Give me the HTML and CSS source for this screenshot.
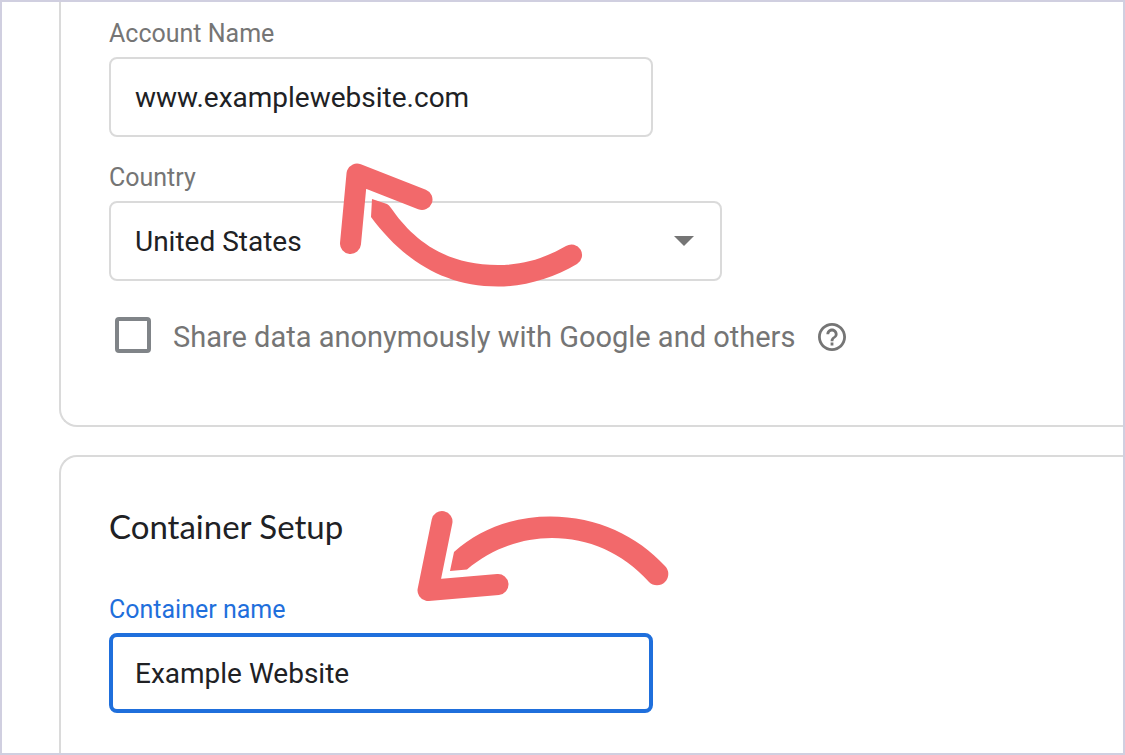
FILE: index.html
```html
<!DOCTYPE html>
<html lang="en">
<head>
  <meta charset="UTF-8" />
  <meta name="viewport" content="width=device-width, initial-scale=1.0"/>
  <title>Add a New Account</title>
  <link rel="stylesheet" href="styles.css">
</head>
<body>

  <main class="frame">
    <section class="card account">
      <div class="field">
        <label for="account">Account Name</label>
        <input type="text" id="account" value="www.examplewebsite.com">
      </div>

      <div class="field">
        <label for="country">Country</label>
        <div class="select">
          <select id="country">
            <option>United States</option>
          </select>
          <svg class="caret" viewBox="0 0 20 10"><path d="M0 0h20L10 10z"/></svg>
        </div>
      </div>

      <div class="share">
        <input type="checkbox" id="share">
        <label for="share">Share data anonymously with Google and others</label>
        <button class="help" aria-label="Help">
          <svg viewBox="2 2 20 20"><path d="M11 18h2v-2h-2v2zm1-16C6.48 2 2 6.48 2 12s4.48 10 10 10 10-4.48 10-10S17.52 2 12 2zm0 18c-4.41 0-8-3.59-8-8s3.59-8 8-8 8 3.59 8 8-3.59 8-8 8zm0-14c-2.21 0-4 1.79-4 4h2c0-1.1.9-2 2-2s2 .9 2 2c0 2-3 1.75-3 5h2c0-2.25 3-2.5 3-5 0-2.21-1.79-4-4-4z"/></svg>
        </button>
      </div>

      <svg class="arrow arrow-account" viewBox="340 162 244 126">
        <path class="head" d="M422 199.5L357 174L350.5 243.5"/>
        <path d="M372 199L387 204Q389 205 391 208C410 235 440 265 498 265C524 265 545 258 566 246A10.5 10.5 0 0 1 577 264C553 278 526 286.5 498 286.5C440 286.5 400 256 371 217Z"/>
      </svg>
    </section>

    <section class="card container">
      <h2>Container Setup</h2>
      <div class="field active">
        <label for="container">Container name</label>
        <input type="text" id="container" value="Example Website">
      </div>

      <svg class="arrow arrow-container" viewBox="416 510 254 92">
        <path class="head" d="M442 521.5L428 590.5L498 584.5"/>
        <path d="M454 552C480 528 515 516.5 550 516.5C598 516.5 637 536 665 566A10.5 10.5 0 0 1 649 582C622 552 588 538 552 538C520 538 490 550 467 569.5L450 571Z"/>
      </svg>
    </section>
  </main>

</body>
</html>
```

FILE: styles.css
```css
* {
  box-sizing: border-box;
}

body {
  margin: 0;
  background: #fff;
  font-family: Roboto, sans-serif;
  color: #202124;
}

.frame {
  height: 100vh;
  padding-left: 57px;
  border: 2px solid #d0cfe0;
  overflow: hidden;
  display: flex;
  flex-direction: column;
  gap: 28px;
}

.card {
  position: relative;
  flex-shrink: 0;
  padding: 50px 48px;
  border: 2px solid #dadada;
  border-right: none;
  border-radius: 18px 0 0 18px;
}

.account {
  padding-top: 17px;
  padding-bottom: 68px;
  border-top: none;
  border-radius: 0 0 0 18px;
  display: flex;
  flex-direction: column;
  gap: 26px;
}

.container {
  padding-bottom: 96px;
  display: flex;
  flex-direction: column;
  gap: 50px;
}

h2 {
  margin: 0;
  font: 400 33px/38px Lato, sans-serif;
}

.field {
  display: flex;
  flex-direction: column;
  align-items: flex-start;
  gap: 8px;
}

label {
  font-size: 25px;
  line-height: 30px;
  color: #757575;
}

input[type="text"],
select {
  width: 544px;
  max-width: 100%;
  height: 80px;
  padding: 0 24px;
  border: 2px solid #dadada;
  border-radius: 8px;
  background: #fff;
  font: 28px Roboto, sans-serif;
  color: #202124;
  outline: none;
}

.select {
  display: grid;
  align-items: center;
  width: 613px;
  max-width: 100%;
}

select {
  width: 100%;
  appearance: none;
}

select,
.caret {
  grid-area: 1 / 1;
}

.caret {
  justify-self: end;
  width: 20px;
  height: 10px;
  margin-right: 28px;
  fill: #757575;
  pointer-events: none;
}

.active label {
  color: #1f6fdc;
}

.active input[type="text"] {
  padding: 0 22px;
  border: 4px solid #1f6fdc;
}

.share {
  display: flex;
  align-items: center;
  margin-top: 10px;
  padding-left: 6px;
}

.share input {
  appearance: none;
  width: 36px;
  height: 36px;
  margin: 0 22px 4px 0;
  border: 4px solid #808488;
  border-radius: 4px;
}

.share label {
  font-size: 29px;
}

.help {
  width: 28px;
  height: 28px;
  margin-left: 23px;
  padding: 0;
  border: none;
  background: none;
}

.help svg {
  display: block;
  fill: #757575;
}

/* hand-drawn arrows on top of the form */
.arrow {
  position: absolute;
  fill: #f2696b;
  pointer-events: none;
}

.head {
  fill: none;
  stroke: #f2696b;
  stroke-width: 21;
  stroke-linecap: round;
  stroke-linejoin: round;
}

.arrow-account {
  left: 279px;
  top: 160px;
  width: 244px;
}

.arrow-container {
  left: 355px;
  top: 53px;
  width: 254px;
}
```
